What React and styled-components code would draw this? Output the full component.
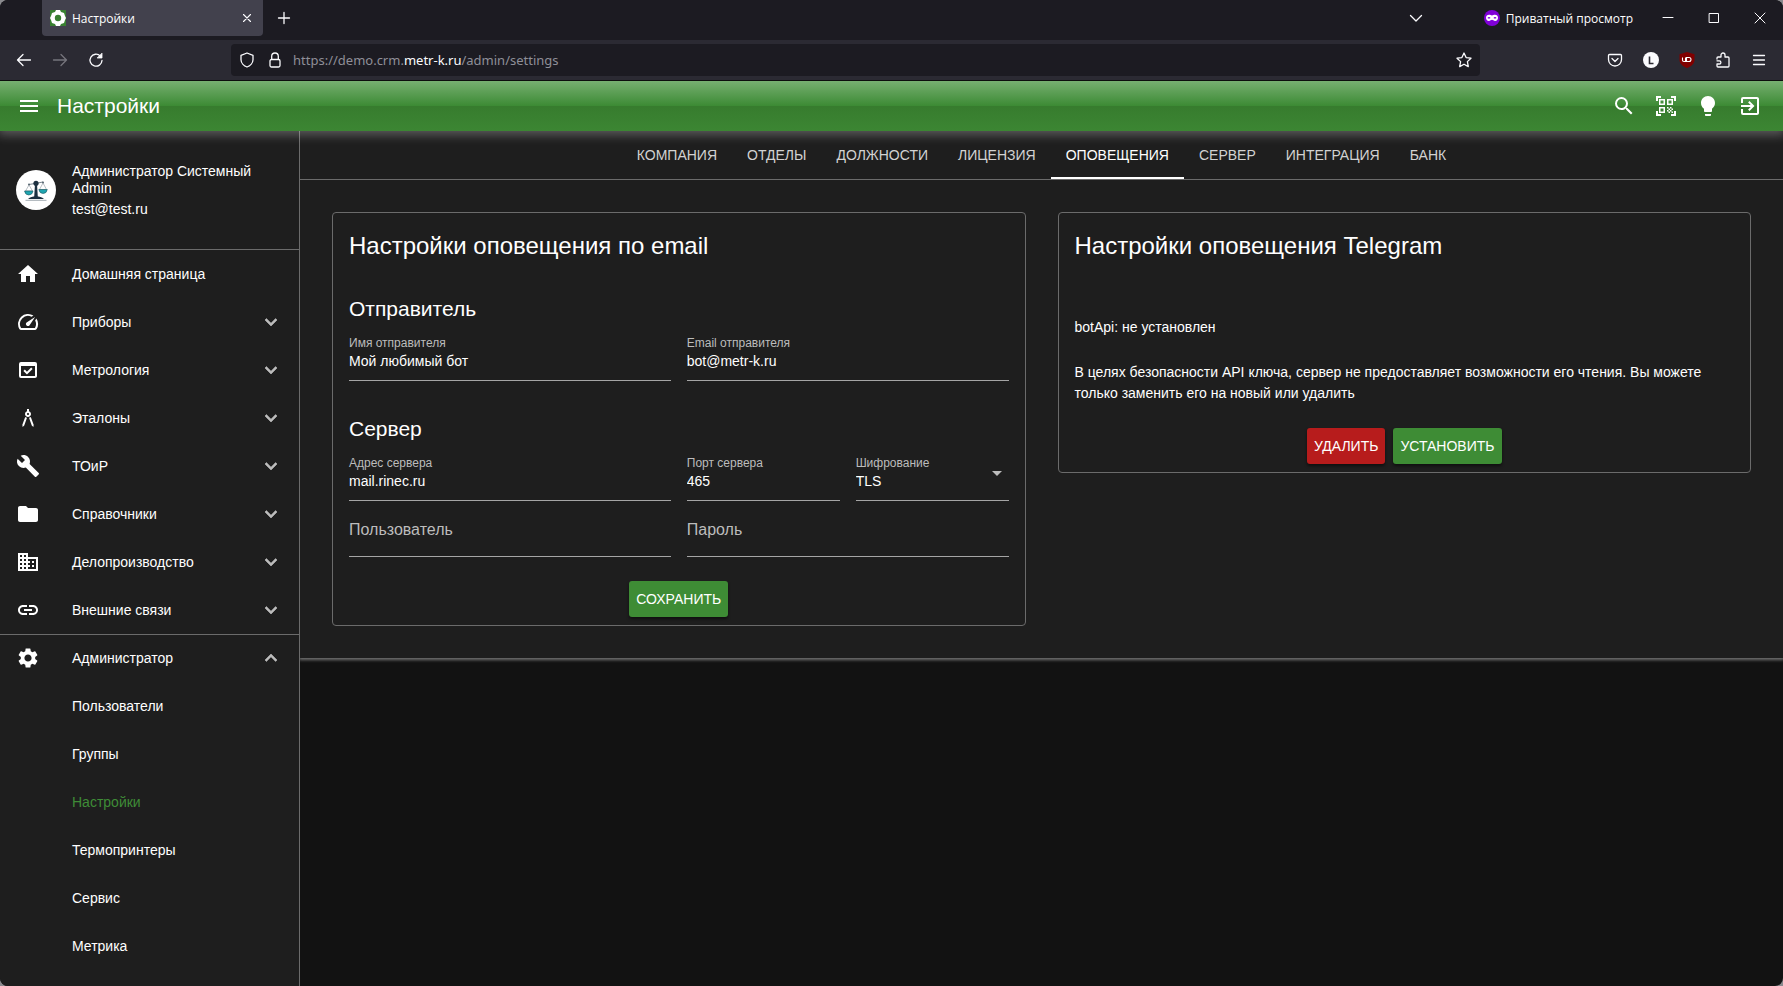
import React from "react";
import styled, { createGlobalStyle, css } from "styled-components";
import {
  MdMenu, MdSearch, MdQrCodeScanner, MdLightbulb, MdExitToApp, MdHome, MdSpeed,
  MdDomainVerification, MdArchitecture, MdBuild, MdFolder, MdBusiness, MdLink,
  MdSettings, MdExpandMore, MdExpandLess, MdArrowDropDown,
} from "react-icons/md";

const GlobalStyle = createGlobalStyle`
  *, *::before, *::after { box-sizing: border-box; }
  html { background: #8a8a8e; }
  body { margin: 0; font-family: "Liberation Sans", Arial, sans-serif; font-size: 14px; color: #fff; }
  button, input, select { font: inherit; color: inherit; }
  h1, h2, h3, p, ul { margin: 0; padding: 0; font-weight: 400; }
  ul { list-style: none; }
`;

const Window = styled.div`
  display: flex;
  flex-direction: column;
  min-height: 100vh;
  background: #121212;
  border-radius: 8px;
  overflow: hidden;
`;

/* Browser chrome */
const ChromeButton = styled.button`
  display: flex;
  align-items: center;
  justify-content: center;
  flex: none;
  width: ${(p) => p.$w || 36}px;
  height: 32px;
  padding: 0;
  border: 0;
  background: none;
  color: ${(p) => (p.$dim ? "#76757d" : "#fbfbfe")};
`;

const TabStrip = styled.div`
  display: flex;
  align-items: center;
  height: 40px;
  padding: 0 0 4px 42px;
  background: #1c1b22;
  font-family: "Open Sans", "Noto Sans", sans-serif;
  font-size: 12px;
`;

const BrowserTab = styled.div`
  display: flex;
  align-items: center;
  gap: 6px;
  width: 221px;
  height: 36px;
  padding: 0 0 0 8px;
  border-radius: 0 0 4px 4px;
  background: #42414d;

  span { flex: 1; }
`;

const Spacer = styled.div`
  flex: 1;
`;

const PrivateBadge = styled.div`
  display: flex;
  align-items: center;
  gap: 6px;
  margin: 0 12px 0 50px;
`;

const Toolbar = styled.div`
  position: relative;
  z-index: 2;
  display: flex;
  align-items: center;
  height: 41px;
  padding: 0 6px;
  background: #2b2a33;
  border-bottom: 1px solid #0c0c0d;
`;

const AddressBar = styled.div`
  display: flex;
  align-items: center;
  flex: 1;
  height: 32px;
  margin: 0 117px 0 117px;
  padding-left: 2px;
  border-radius: 4px;
  background: #1c1b22;
`;

const Address = styled.a`
  flex: 1;
  margin-left: 4px;
  color: #8f8f98;
  font-family: "Noto Sans", "Open Sans", sans-serif;
  font-size: 13px;
  text-decoration: none;

  b { color: #fbfbfe; font-weight: 400; }
`;

/* Application bar */
const AppBar = styled.header`
  position: relative;
  z-index: 1;
  display: flex;
  align-items: center;
  height: 50px;
  padding: 0 12px 0 9px;
  background: linear-gradient(#77af71 0%, #3d8b35 49%, #377c2e 51%, #3c8633 100%);
  box-shadow: 0 2px 10px 2px rgba(255, 255, 255, 0.28);
`;

const AppTitle = styled.h1`
  flex: 1;
  margin-left: 8px;
  font-size: 21px;
  line-height: 32px;
`;

const AppAction = styled.button`
  display: flex;
  align-items: center;
  justify-content: center;
  width: ${(p) => p.$w || 42}px;
  height: 42px;
  padding: 0;
  border: 0;
  background: none;
  font-size: 24px;
`;

const Body = styled.div`
  display: flex;
  flex: 1;
`;

/* Sidebar */
const Sidebar = styled.aside`
  flex: none;
  width: 300px;
  background: #1e1e1e;
  border-right: 1px solid #6b6b6b;
`;

const Profile = styled.div`
  display: flex;
  align-items: flex-start;
  gap: 16px;
  height: 119px;
  padding: 32px 16px 0;
  border-bottom: 1px solid #6b6b6b;
  line-height: 17px;

  svg { flex: none; margin-top: 7px; }
  p + p { margin-top: 4px; }
`;

const NavLink = styled.a`
  display: flex;
  align-items: center;
  height: 48px;
  padding: 0 16px;
  box-shadow: ${(p) => (p.$divided ? "inset 0 1px #6b6b6b" : "none")};
  color: ${(p) => (p.$active ? "#3f8c37" : "#fff")};
  text-decoration: none;

  span { flex: 1; margin-left: 32px; }
`;

const NavIcon = styled.i`
  display: flex;
  width: 24px;
  height: 24px;
  font-size: 24px;
`;

const Chevron = styled(NavIcon)`
  color: #bdbdbd;

  path { stroke: currentColor; stroke-width: 0.6px; }
  path[fill="none"] { stroke: none; }
`;

/* Settings page */
const Main = styled.main`
  flex: 1;
  min-width: 0;
`;

const Surface = styled.section`
  background: #1e1e1e;
  box-shadow: 0 1px 3px 1px rgba(255, 255, 255, 0.4);
  clip-path: inset(0 0 -8px 0);
`;

const Tabs = styled.nav`
  display: flex;
  justify-content: center;
  height: 49px;
  border-bottom: 1px solid #6b6b6b;
`;

const Tab = styled.a`
  padding: 0 15px;
  line-height: 48px;
  color: #d2d2d2;
  text-decoration: none;
  ${(p) => p.$active && css`
    color: #fff;
    box-shadow: inset 0 -2px #fff;
  `}
`;

const Cards = styled.div`
  display: grid;
  grid-template-columns: 1fr 1fr;
  align-items: start;
  gap: 32px;
  padding: 32px;
`;

const Card = styled.div`
  padding: 16px 16px 8px;
  border: 1px solid #6b6b6b;
  border-radius: 4px;
`;

const CardTitle = styled.h2`
  font-size: 24px;
  line-height: 34px;
`;

const GroupTitle = styled.h3`
  margin-top: ${(p) => p.$gap || 32}px;
  font-size: 21px;
  line-height: 32px;
`;

const FieldRow = styled.div`
  display: grid;
  grid-template-columns: 1fr 1fr;
  gap: 16px;
`;

const FieldBox = styled.div`
  position: relative;
  display: flex;
  flex-direction: column;
  min-width: 0;
  height: 56px;
  padding-top: ${(p) => (p.$empty ? 19 : 10)}px;
  border-bottom: 1px solid #a5a5a5;

  label {
    color: #bcbcbc;
    font-size: ${(p) => (p.$empty ? 16 : 12)}px;
    line-height: ${(p) => (p.$empty ? 20 : 16)}px;
  }

  input, select {
    width: 100%;
    height: ${(p) => (p.$empty ? 16 : 20)}px;
    padding: 0;
    border: 0;
    outline: 0;
    background: none;
    line-height: 20px;
    appearance: none;
  }
`;

const SelectArrow = styled(MdArrowDropDown)`
  position: absolute;
  right: 0;
  top: 16px;
  color: #bcbcbc;
  font-size: 24px;
  pointer-events: none;
`;

const Text = styled.p`
  margin-top: ${(p) => p.$gap}px;
  line-height: 21px;
`;

const Actions = styled.div`
  display: flex;
  justify-content: center;
  gap: 8px;
  margin-top: 24px;
`;

const ActionButton = styled.button`
  height: 36px;
  padding: 0 7px;
  border: 0;
  border-radius: 3px;
  background: ${(p) => (p.$danger ? "#b71c1c" : "#3e8c35")};
  box-shadow: 0 2px 3px rgba(0, 0, 0, 0.5);
`;

const Line = ({ size = 16, w = 1.3, children }) => (
  <svg width={size} height={size} viewBox="0 0 16 16" fill="none" stroke="currentColor"
    strokeWidth={w} strokeLinecap="round" strokeLinejoin="round">{children}</svg>
);

const Favicon = () => (
  <svg width="16" height="16" viewBox="0 0 16 16">
    <path fill="#388030" d="M0 0h16v16H0z" />
    <path fill="#fff" d="M6 0h4l1 2 3 1 1 3 1 2-1 2-1 3-3 1-1 2H6l-1-2-3-1-1-3-1-2 1-2 1-3 3-1z" />
    <circle cx="8" cy="8" r="3.2" fill="#388030" />
  </svg>
);

const ScalesAvatar = () => (
  <svg width="40" height="40" viewBox="0 0 40 40">
    <circle cx="20" cy="20" r="20" fill="#fff" />
    <path d="M13 14.500l7-1.200 7-1.300" stroke="#7b8790" strokeWidth="1" fill="none" />
    <path d="M19 14h2l.8 13h-3.600z" fill="#1d3040" />
    <circle cx="20" cy="13.300" r="2.600" fill="#1d3040" />
    <circle cx="13" cy="14.500" r="1" fill="#55636e" />
    <circle cx="27" cy="12.500" r="1" fill="#55636e" />
    <path d="M13 15l-3.500 6h7zM27 13l-3.500 6.500h7z" stroke="#8b969d" strokeWidth="0.6" fill="none" />
    <path d="M8.500 21h8.500q-.6 4-4.200 4t-4.300-4zM22.800 19.500h8.500q-.6 4-4.200 4t-4.300-4z" fill="#1fa5b0" stroke="#1d5560" strokeWidth="0.6" />
    <path d="M12 29q3-2.800 8-2.800t8 2.800z" fill="#1d3040" />
    <path d="M9.500 30.300h21" stroke="#8b969d" strokeWidth="0.8" />
  </svg>
);

const NAV = [
  ["Домашняя страница", MdHome],
  ["Приборы", MdSpeed, "more"],
  ["Метрология", MdDomainVerification, "more"],
  ["Эталоны", MdArchitecture, "more"],
  ["ТОиР", MdBuild, "more"],
  ["Справочники", MdFolder, "more"],
  ["Делопроизводство", MdBusiness, "more"],
  ["Внешние связи", MdLink, "more"],
  ["Администратор", MdSettings, "less"],
  ["Пользователи"], ["Группы"], ["Настройки"], ["Термопринтеры"], ["Сервис"], ["Метрика"],
];

const TABS = ["КОМПАНИЯ", "ОТДЕЛЫ", "ДОЛЖНОСТИ", "ЛИЦЕНЗИЯ", "ОПОВЕЩЕНИЯ", "СЕРВЕР", "ИНТЕГРАЦИЯ", "БАНК"];

const Field = ({ id, label, value = "", type = "text" }) => (
  <FieldBox $empty={!value}>
    <label htmlFor={id}>{label}</label>
    <input id={id} type={type} defaultValue={value} />
  </FieldBox>
);

function BrowserChrome() {
  return (
    <>
      <TabStrip>
        <BrowserTab>
          <Favicon />
          <span>Настройки</span>
          <ChromeButton $w={32} aria-label="Закрыть вкладку">
            <Line w={1.1}><path d="M4.500 4.500l7 7m0-7l-7 7" /></Line>
          </ChromeButton>
        </BrowserTab>
        <ChromeButton $w={42} aria-label="Новая вкладка"><Line><path d="M8 2.500v11M2.500 8h11" /></Line></ChromeButton>
        <Spacer />
        <ChromeButton aria-label="Список вкладок"><Line><path d="M2.500 5.500L8 11l5.500-5.500" /></Line></ChromeButton>
        <PrivateBadge>
          <svg width="16" height="16" viewBox="0 0 16 16">
            <circle cx="8" cy="8" r="8" fill="#8000d7" />
            <path fill="#fff" fillRule="evenodd" d="M5 4.800c1.300 0 2 .7 3 .7s1.700-.7 3-.7c1.700 0 3 1.300 3 3s-1.200 3.200-2.800 3.200C9.700 11 9 9.800 8 9.800S6.300 11 4.800 11C3.200 11 2 9.500 2 7.800s1.300-3 3-3zM3.500 8c.4.800 2.500.8 3 0-.5-1.200-2.500-1.200-3 0zm6 0c.4.800 2.500.8 3 0-.5-1.200-2.500-1.200-3 0z" />
          </svg>
          Приватный просмотр
        </PrivateBadge>
        <ChromeButton $w={46} aria-label="Свернуть"><Line w={1}><path d="M3 7.500h10" /></Line></ChromeButton>
        <ChromeButton $w={46} aria-label="Развернуть"><Line w={1}><path strokeLinejoin="miter" d="M3.500 3.500h9v9h-9z" /></Line></ChromeButton>
        <ChromeButton $w={46} aria-label="Закрыть"><Line w={1}><path d="M3 3l10 10m0-10L3 13" /></Line></ChromeButton>
      </TabStrip>
      <Toolbar>
        <ChromeButton aria-label="Назад"><Line><path d="M14.500 8h-13M7 2.500L1.500 8 7 13.500" /></Line></ChromeButton>
        <ChromeButton $dim aria-label="Вперёд"><Line><path d="M1.500 8h13M9 2.500L14.500 8 9 13.500" /></Line></ChromeButton>
        <ChromeButton aria-label="Обновить">
          <Line><path d="M14 8.500A6 6 0 1 1 12.300 4" /><path d="M14 1.500v4.500h-4.500z" fill="currentColor" strokeWidth="0.800" /></Line>
        </ChromeButton>
        <AddressBar>
          <ChromeButton $w={28} aria-label="Защита">
            <Line><path d="M8 1l6 2.300v4.500c0 3.400-3.200 6.200-6 7.200-2.800-1-6-3.800-6-7.200V3.300z" /></Line>
          </ChromeButton>
          <ChromeButton $w={28} aria-label="Соединение">
            <Line><rect x="3" y="7.500" width="10" height="7.500" rx="1.500" /><path d="M4.700 7V4.300a3.300 3.300 0 0 1 6.600 0V7" /></Line>
          </ChromeButton>
          <Address href="#">https://demo.crm.<b>metr-k.ru</b>/admin/settings</Address>
          <ChromeButton $w={32} aria-label="Добавить в закладки">
            <Line><path d="M8 1l2.100 4.600 4.900.6-3.600 3.400.9 5L8 12.200l-4.300 2.400.9-5L1 6.200l4.900-.6z" /></Line>
          </ChromeButton>
        </AddressBar>
        <ChromeButton aria-label="Pocket">
          <Line><path d="M2.500 2.500h11q1 0 1 1V7.500a6.500 6.500 0 0 1-13 0V3.500q0-1 1-1zM5 6.500l3 3 3-3" /></Line>
        </ChromeButton>
        <ChromeButton aria-label="Профиль">
          <svg width="16" height="16" viewBox="0 0 16 16">
            <circle cx="8" cy="8" r="8" fill="#fbfbfe" />
            <path d="M6.500 4.500v7h4" stroke="#2b2a33" strokeWidth="1.600" fill="none" />
          </svg>
        </ChromeButton>
        <ChromeButton aria-label="uBlock">
          <svg width="16" height="16" viewBox="0 0 16 16">
            <path d="M8 0l7.500 2.300V8c0 4-4 6.800-7.500 8C4.500 14.800.5 12 .5 8V2.300z" fill="#800000" />
            <path d="M3.500 5.500v2.800q0 1.200 1.500 1.200h1.500v-4M7.500 5.500v4H10a2 2 0 0 0 0-4z" stroke="#fff" strokeWidth="1.100" fill="none" />
          </svg>
        </ChromeButton>
        <ChromeButton aria-label="Расширения">
          <Line><path d="M2 7V6q0-1 1-1h3V3a2 2 0 0 1 4 0v2h3q1 0 1 1v8q0 1-1 1H3q-1 0-1-1v-2h2.300a1.600 1.600 0 0 0 0-3.200H2" /></Line>
        </ChromeButton>
        <ChromeButton aria-label="Меню"><Line><path d="M2.500 3.500h11M2.500 8h11M2.500 12.500h11" /></Line></ChromeButton>
      </Toolbar>
    </>
  );
}

export default function App() {
  return (
    <Window>
      <GlobalStyle />
      <BrowserChrome />
      <AppBar>
        <AppAction $w={40} aria-label="Меню"><MdMenu /></AppAction>
        <AppTitle>Настройки</AppTitle>
        <AppAction aria-label="Поиск"><MdSearch /></AppAction>
        <AppAction aria-label="Сканировать код"><MdQrCodeScanner /></AppAction>
        <AppAction aria-label="Тема"><MdLightbulb /></AppAction>
        <AppAction aria-label="Выход"><MdExitToApp /></AppAction>
      </AppBar>
      <Body>
        <Sidebar>
          <Profile>
            <ScalesAvatar />
            <div>
              <p>Администратор Системный Admin</p>
              <p>test@test.ru</p>
            </div>
          </Profile>
          <ul>
            {NAV.map(([label, Icon, state]) => (
              <li key={label}>
                <NavLink href="#" $divided={state === "less"} $active={label === "Настройки"}>
                  <NavIcon>{Icon && <Icon />}</NavIcon>
                  <span>{label}</span>
                  {state && <Chevron>{state === "less" ? <MdExpandLess /> : <MdExpandMore />}</Chevron>}
                </NavLink>
              </li>
            ))}
          </ul>
        </Sidebar>
        <Main>
          <Surface>
            <Tabs>
              {TABS.map((t) => <Tab key={t} href="#" $active={t === "ОПОВЕЩЕНИЯ"}>{t}</Tab>)}
            </Tabs>
            <Cards>
              <Card>
                <CardTitle>Настройки оповещения по email</CardTitle>
                <GroupTitle $gap={30}>Отправитель</GroupTitle>
                <FieldRow>
                  <Field id="sender-name" label="Имя отправителя" value="Мой любимый бот" />
                  <Field id="sender-email" label="Email отправителя" value="bot@metr-k.ru" />
                </FieldRow>
                <GroupTitle>Сервер</GroupTitle>
                <FieldRow>
                  <Field id="host" label="Адрес сервера" value="mail.rinec.ru" />
                  <FieldRow>
                    <Field id="port" label="Порт сервера" value="465" />
                    <FieldBox>
                      <label htmlFor="encryption">Шифрование</label>
                      <select id="encryption" defaultValue="TLS"><option>TLS</option></select>
                      <SelectArrow />
                    </FieldBox>
                  </FieldRow>
                </FieldRow>
                <FieldRow>
                  <Field id="user" label="Пользователь" />
                  <Field id="password" label="Пароль" type="password" />
                </FieldRow>
                <Actions><ActionButton>СОХРАНИТЬ</ActionButton></Actions>
              </Card>
              <Card>
                <CardTitle>Настройки оповещения Telegram</CardTitle>
                <Text $gap={54}>botApi: не установлен</Text>
                <Text $gap={24}>
                  В целях безопасности API ключа, сервер не предоставляет возможности его чтения. Вы можете только заменить его на новый или удалить
                </Text>
                <Actions>
                  <ActionButton $danger>УДАЛИТЬ</ActionButton>
                  <ActionButton>УСТАНОВИТЬ</ActionButton>
                </Actions>
              </Card>
            </Cards>
          </Surface>
        </Main>
      </Body>
    </Window>
  );
}
